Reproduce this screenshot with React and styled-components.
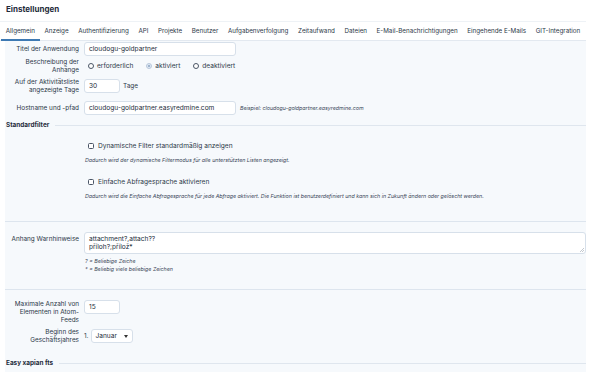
import React from "react";
import styled, { createGlobalStyle } from "styled-components";

const Global = createGlobalStyle`
  body {
    margin: 0;
    background: #ffffff;
    font-family: Inter, "Noto Sans", sans-serif;
    color: #2c3848;
  }
`;

const Page = styled.div`
  width: 590px;
  height: 372px;
  overflow: hidden;
`;

const Title = styled.h1`
  margin: 0;
  padding: 4px 0 0 6px;
  height: 17px;
  box-sizing: border-box;
  font-size: 8px;
  font-weight: 700;
  color: #1f2b3b;
`;

const Tabs = styled.nav`
  display: flex;
  height: 20px;
  box-sizing: border-box;
  border-top: 1px solid #eef2f6;
  border-bottom: 1px solid #e3e9f0;
  padding-left: 1px;
  margin-top: 4px;
  width: 586px;
`;

const Tab = styled.span`
  display: flex;
  align-items: center;
  padding: 1px 4.8px 0;
  font-size: 6.25px;
  color: #2c3848;
  white-space: nowrap;
  border-bottom: 2px solid ${(p) => (p.$active ? "#3d79b3" : "transparent")};
  margin-bottom: -1px;
`;

const Content = styled.div`
  margin-left: 5px;
  width: 581px;
  background: #f6f9fc;
  padding-top: 1px;
  padding-bottom: 20px;
`;

const Row = styled.div`
  display: grid;
  grid-template-columns: 74px 1fr;
  column-gap: 5px;
  align-items: ${(p) => p.$align || "center"};
  margin-top: ${(p) => p.$top || 0}px;
`;

const Label = styled.div`
  text-align: right;
  font-size: 6.4px;
  line-height: 8px;
  color: #2c3848;
  margin-top: ${(p) => p.$top || 0}px;
`;

const Field = styled.div`
  display: flex;
  align-items: center;
  gap: 3px;
  font-size: 6.4px;
`;

const Input = styled.div`
  box-sizing: border-box;
  width: ${(p) => p.$w}px;
  height: 14px;
  background: #fff;
  border: 1px solid #d7e0ea;
  border-radius: 3px;
  padding: 0 4px;
  display: flex;
  align-items: center;
  font-size: 6.6px;
  color: #222c3a;
`;

const Hint = styled.span`
  font-size: 5.3px;
  font-style: italic;
  color: #3a4658;
  margin-left: ${(p) => p.$left || 0}px;
`;

const RadioItem = styled.label`
  display: flex;
  align-items: center;
  gap: 3px;
  margin-left: 4px;
  margin-right: 6px;
  font-size: 6.6px;
`;

const Radio = styled.span`
  width: 6px;
  height: 6px;
  box-sizing: border-box;
  border-radius: 50%;
  border: 1px solid ${(p) => (p.$on ? "#b9c9dc" : "#4a5566")};
  background: ${(p) => (p.$on ? "#dfe8f3" : "#fff")};
  display: flex;
  align-items: center;
  justify-content: center;
  &::after {
    content: "";
    width: 2px;
    height: 2px;
    border-radius: 50%;
    background: ${(p) => (p.$on ? "#8aa3c0" : "transparent")};
  }
`;

const SectionHead = styled.div`
  display: flex;
  align-items: center;
  gap: 6px;
  margin-top: ${(p) => p.$top}px;
  margin-left: 1px;
  font-size: 6.4px;
  font-weight: 700;
  color: #1f2b3b;
  line-height: 8px;
  &::after {
    content: "";
    flex: 1;
    height: 1px;
    background: #dfe6ee;
  }
`;

const CheckRow = styled.div`
  display: flex;
  align-items: center;
  gap: 4px;
  margin-left: 83px;
  margin-top: ${(p) => p.$top}px;
  font-size: 6.6px;
  line-height: 8px;
`;

const Box = styled.span`
  width: 6px;
  height: 6px;
  box-sizing: border-box;
  border: 1px solid #4a5566;
  border-radius: 1.5px;
  background: #fff;
`;

const HintLine = styled.div`
  margin-left: ${(p) => p.$left || 80}px;
  margin-top: ${(p) => p.$top || 0}px;
  line-height: 8px;
  font-size: 5.3px;
  font-style: italic;
  color: #3a4658;
`;

const Divider = styled.div`
  height: 1px;
  background: #dde5ee;
  margin-top: ${(p) => p.$top}px;
`;

const TextArea = styled.div`
  box-sizing: border-box;
  height: 22px;
  background: #fff;
  border: 1px solid #d7e0ea;
  border-radius: 3px;
  padding: 2px 4px;
  font-size: 6.6px;
  line-height: 8px;
  color: #222c3a;
  position: relative;
`;

const Grip = styled.svg`
  position: absolute;
  right: 1px;
  bottom: 1px;
`;

const Select = styled.div`
  box-sizing: border-box;
  width: 42px;
  height: 14px;
  background: #fff;
  border: 1px solid #d7e0ea;
  border-radius: 3px;
  padding: 0 4px 0 3px;
  display: flex;
  align-items: center;
  justify-content: space-between;
  font-size: 6.6px;
  color: #222c3a;
`;

const Caret = styled.svg`
  display: block;
`;

const tabs = [
  "Allgemein",
  "Anzeige",
  "Authentifizierung",
  "API",
  "Projekte",
  "Benutzer",
  "Aufgabenverfolgung",
  "Zeitaufwand",
  "Dateien",
  "E-Mail-Benachrichtigungen",
  "Eingehende E-Mails",
  "GIT-Integration",
];

export default function App() {
  return (
    <Page>
      <Global />
      <Title>Einstellungen</Title>
      <Tabs>
        {tabs.map((t, i) => (
          <Tab key={t} $active={i === 0}>
            {t}
          </Tab>
        ))}
      </Tabs>
      <Content>
        <Row>
          <Label>Titel der Anwendung</Label>
          <Field>
            <Input $w={152}>cloudogu-goldpartner</Input>
          </Field>
        </Row>
        <Row $top={2}>
          <Label>
            Beschreibung der
            <br />
            Anhänge
          </Label>
          <Field>
            <RadioItem>
              <Radio />
              erforderlich
            </RadioItem>
            <RadioItem>
              <Radio $on />
              aktiviert
            </RadioItem>
            <RadioItem>
              <Radio />
              deaktiviert
            </RadioItem>
          </Field>
        </Row>
        <Row $top={4}>
          <Label>
            Auf der Aktivitätsliste
            <br />
            angezeigte Tage
          </Label>
          <Field>
            <Input $w={36}>30</Input>
            Tage
          </Field>
        </Row>
        <Row $top={7}>
          <Label>Hostname und -pfad</Label>
          <Field>
            <Input $w={152}>cloudogu-goldpartner.easyredmine.com</Input>
            <Hint $left={1}>Beispiel: cloudogu-goldpartner.easyredmine.com</Hint>
          </Field>
        </Row>

        <SectionHead $top={6}>Standardfilter</SectionHead>

        <CheckRow $top={13}>
          <Box />
          Dynamische Filter standardmäßig anzeigen
        </CheckRow>
        <HintLine $top={6}>
          Dadurch wird der dynamische Filtermodus für alle unterstützten Listen angezeigt.
        </HintLine>
        <CheckRow $top={14}>
          <Box />
          Einfache Abfragesprache aktivieren
        </CheckRow>
        <HintLine $top={6}>
          Dadurch wird die Einfache Abfragesprache für jede Abfrage aktiviert. Die Funktion ist benutzerdefiniert und kann sich in Zukunft ändern oder gelöscht werden.
        </HintLine>

        <Divider $top={21} />

        <Row $top={10} $align="start">
          <Label $top={3}>Anhang Warnhinweise</Label>
          <TextArea>
            attachment?,attach??
            <br />
            příloh?;přílož*
            <Grip width="4" height="4" viewBox="0 0 4 4">
              <path d="M4 0L0 4M4 2L2 4" stroke="#9aa4b0" strokeWidth="0.6" />
            </Grip>
          </TextArea>
        </Row>
        <HintLine $top={3}>? = Beliebige Zeiche</HintLine>
        <HintLine>* = Beliebig viele beliebige Zeichen</HintLine>

        <Divider $top={16} />

        <Row $top={10} $align="start">
          <Label>
            Maximale Anzahl von
            <br />
            Elementen in Atom-
            <br />
            Feeds
          </Label>
          <Field>
            <Input $w={36}>15</Input>
          </Field>
        </Row>
        <Row $top={4}>
          <Label>
            Beginn des
            <br />
            Geschäftsjahres
          </Label>
          <Field>
            1.
            <Select>
              Januar
              <Caret width="4" height="3" viewBox="0 0 4 3">
                <path d="M0 0H4L2 3Z" fill="#333" />
              </Caret>
            </Select>
          </Field>
        </Row>

        <SectionHead $top={15}>Easy xapian fts</SectionHead>
      </Content>
    </Page>
  );
}
